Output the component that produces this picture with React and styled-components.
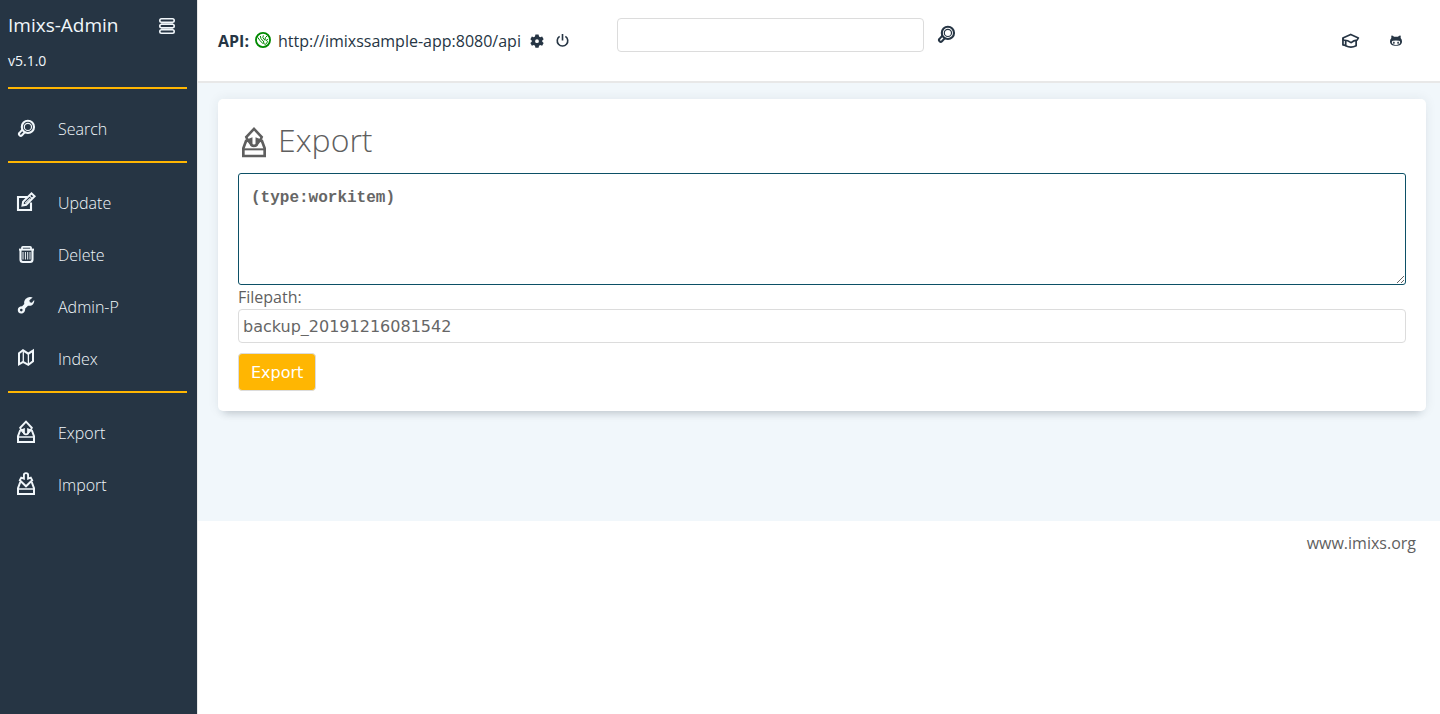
import React, { useState } from "react";
import styled, { createGlobalStyle } from "styled-components";

const menuGroups = [
  [{ label: "Search", icon: "search" }],
  [
    { label: "Update", icon: "edit" },
    { label: "Delete", icon: "trash" },
    { label: "Admin-P", icon: "wrench" },
    { label: "Index", icon: "map" },
  ],
  [
    { label: "Export", icon: "export" },
    { label: "Import", icon: "import" },
  ],
];

// Icon drawings, all on a 24px grid
const icons = {
  menu: (
    <g fill="none" stroke="currentColor" strokeWidth="1.6">
      <rect x="4.8" y="4.8" width="14.4" height="3.4" rx="1.7" />
      <rect x="4.8" y="10.3" width="14.4" height="3.4" rx="1.7" />
      <rect x="4.8" y="15.8" width="14.4" height="3.4" rx="1.7" />
      <path d="M6 9.2h12M6 14.8h12" strokeWidth="0.8" />
    </g>
  ),
  search: (
    <g fill="none" stroke="currentColor">
      <circle cx="13.9" cy="9.9" r="6.1" strokeWidth="2.1" />
      <circle cx="13.9" cy="9.9" r="3.6" strokeWidth="1.2" />
      <path
        d="M8.6 12.4l-3.1 3.4a1.7 1.7 0 0 0 2.5 2.4l3.2-3.3"
        strokeWidth="2"
      />
    </g>
  ),
  edit: (
    <g fill="none" stroke="currentColor">
      <path d="M13.5 6H4v13h13v-7.5" strokeWidth="2.1" />
      <path d="M8.5 14.5l.6-3.8 8.4-8.4 3.1 3-8.4 8.5z" strokeWidth="2" />
      <path d="M15.2 4.6l3.1 3M11 12.4l5.2-5.1" strokeWidth="1.1" />
    </g>
  ),
  trash: (
    <g fill="none" stroke="currentColor">
      <path
        d="M6.5 7v9.5q0 2.5 2.4 2.5h7.200q2.400 0 2.400-2.500V7"
        strokeWidth="2.1"
      />
      <path d="M5 6.600h15" strokeWidth="2" />
      <path d="M8 6V4.600q0-.7.8-.7h7.400q.8 0 .8.700V6" strokeWidth="1.8" />
      <path d="M9 9v7.5M11.400 9v7.500M13.700 9v7.500M16 9v7.500" />
    </g>
  ),
  wrench: (
    <path
      fill="currentColor"
      fillRule="evenodd"
      d="M15 2.2c1.500-.3 2.700-.1 3.700.4L15.400 5.300l.4 1.900 2 .5L20.200 5c.5 3.900-2.500 6.500-6.200 5.700L11.200 13.500c.2 3-1.700 5-4 5-2.100 0-3.600-1.700-3.400-3.800.1-2.100 1.900-3.600 4.300-3.500l2.200-2.200C9.600 5.700 11.500 2.900 15 2.200zM7.300 13.800a1.300 1.300 0 1 0 0 2.600 1.300 1.300 0 0 0 0-2.600z"
    />
  ),
  map: (
    <g fill="none" stroke="currentColor">
      <path
        d="M5 6.300l4-3 5.300 3.400L19 3.600v10.600l-4.700 3.600-5.200-3L5 17.300z"
        strokeWidth="2"
      />
      <path d="M9.300 4.500v10M14.400 7v10" strokeWidth="1.3" />
    </g>
  ),
  export: (
    <g fill="none" stroke="currentColor">
      <path d="M6.300 9L4 15.200V21h16v-5.800L17.700 9" strokeWidth="2" />
      <path d="M4 16h16" strokeWidth="1.5" />
      <path
        d="M12 .6l5.800 6.200-1.200 2.600-2.500-1v3.200q0 1.800-2.100 1.800t-2.100-1.800V8.400l-2.500 1-1.200-2.600z"
        strokeWidth="1.9"
      />
      <path
        d="M7.2 9.500l2.300-.7v3.700zM16.800 9.500l-2.300-.7v3.700z"
        fill="currentColor"
      />
    </g>
  ),
  import: (
    <g fill="none" stroke="currentColor">
      <path d="M6.300 9L4 15.200V21h16v-5.800L17.700 9" strokeWidth="2" />
      <path d="M4 16h16" strokeWidth="1.5" />
      <path
        d="M9.900 5.700V2Q9.900 .1 12 .1T14.100 2v3.700l2.700-1.100 1.400 2.600L12 13.300 5.800 7.200l1.400-2.600z"
        strokeWidth="1.9"
      />
    </g>
  ),
  globe: (
    <g fill="none" stroke="currentColor">
      <circle cx="12" cy="12" r="10.6" strokeWidth="2.7" />
      <path
        d="M4 8q3 5 8 9.500l1.500-2.500-4.500-5L8 6M12.500 5l-.7 3.500 3.200 4 .5-4 2.500-2.500M13 17.500l3 1 3-4-2.300-2 3-1.500"
        strokeWidth="1.5"
      />
    </g>
  ),
  gear: (
    <path
      fill="currentColor"
      fillRule="evenodd"
      d="M9.300 1h5.400l.8 3.300 2 1.100 3.300-1 2.600 4.500-2.400 2.300v2l2.400 2.300-2.600 4.500-3.300-1-2 1.100-.8 3.300H9.300l-.8-3.300-2-1.100-3.300 1-2.600-4.500L3 13.200v-2L.6 8.900l2.600-4.500 3.300 1 2-1.100zM12 9a3.200 3.200 0 1 0 0 6.500A3.200 3.200 0 0 0 12 9z"
    />
  ),
  power: (
    <g fill="none" stroke="currentColor" strokeWidth="3">
      <path d="M6.700 4.300a9.700 9.700 0 1 0 10.600 0" />
      <path d="M12 0v12" />
    </g>
  ),
  cap: (
    <g fill="none" stroke="currentColor" strokeLinejoin="round">
      <path
        d="M4.200 8.800L12.800 4.800l8.400 3.800-1.500 2.500q-3.700.2-6.500 2.600-3.200-2.600-8.400-2.800z"
        strokeWidth="1.8"
      />
      <path d="M7.300 11.500v5.700q5.700 3 11.400 0v-5.700" strokeWidth="1.9" />
      <path d="M4.300 9v7.300l2.700.5" strokeWidth="1.9" />
    </g>
  ),
  cat: (
    <path
      fill="currentColor"
      fillRule="evenodd"
      d="M3 1q3 0 5 2.500h8Q18 1 21 1q1 2.600.2 5Q24 8.500 24 12.500c0 6.500-4 9-12 9S0 19 0 12.500Q0 8.500 2.800 6 2 3.600 3 1zM6 11.500c-4 .5-3.500 8.500 6 8.500s10-8 6-8.500q-6-.8-12 0zM7.800 13c2.300 0 2.300 5 0 5s-2.300-5 0-5zm8.400 0c2.300 0 2.300 5 0 5s-2.300-5 0-5z"
    />
  ),
};

const Icon = ({ name, size = 24 }) => (
  <IconSvg $size={size} viewBox="0 0 24 24" aria-hidden="true">
    {icons[name]}
  </IconSvg>
);

const App = () => {
  const [query, setQuery] = useState("(type:workitem)");
  const [filepath, setFilepath] = useState("backup_20191216081542");
  const [search, setSearch] = useState("");

  return (
    <>
      <GlobalStyle />
      <Page>
        <Sidebar>
          <Brand>
            <BrandTitle>Imixs-Admin</BrandTitle>
            <IconButton type="button" aria-label="Toggle menu">
              <Icon name="menu" />
            </IconButton>
          </Brand>
          <Version>v5.1.0</Version>
          {menuGroups.map((group) => (
            <MenuGroup key={group[0].label}>
              {group.map((item) => (
                <li key={item.label}>
                  <MenuLink href="#">
                    <Icon name={item.icon} />
                    {item.label}
                  </MenuLink>
                </li>
              ))}
            </MenuGroup>
          ))}
        </Sidebar>

        <Main>
          <Header>
            <ApiInfo>
              <strong>API:</strong>
              <Status>
                <Icon name="globe" size={16} />
              </Status>
              <span>http://imixssample-app:8080/api</span>
              <ApiAction href="#" aria-label="Settings">
                <Icon name="gear" size={14} />
              </ApiAction>
              <ApiAction href="#" aria-label="Disconnect">
                <Icon name="power" size={13} />
              </ApiAction>
            </ApiInfo>
            <SearchForm onSubmit={(e) => e.preventDefault()}>
              <TextInput
                aria-label="Search"
                value={search}
                onChange={(e) => setSearch(e.target.value)}
              />
              <IconButton aria-label="Start search">
                <Icon name="search" />
              </IconButton>
            </SearchForm>
            <HeaderLinks>
              <a href="#" aria-label="Documentation">
                <Icon name="cap" size={22} />
              </a>
              <a href="#" aria-label="GitHub">
                <Icon name="cat" size={12} />
              </a>
            </HeaderLinks>
          </Header>

          <Content>
            <Card onSubmit={(e) => e.preventDefault()}>
              <Title>
                <Icon name="export" size={32} />
                Export
              </Title>
              <QueryInput
                aria-label="Query"
                value={query}
                onChange={(e) => setQuery(e.target.value)}
              />
              <Label htmlFor="filepath">Filepath:</Label>
              <TextInput
                id="filepath"
                value={filepath}
                onChange={(e) => setFilepath(e.target.value)}
              />
              <SubmitButton>Export</SubmitButton>
            </Card>
          </Content>

          <Footer>
            <a href="#">www.imixs.org</a>
          </Footer>
        </Main>
      </Page>
    </>
  );
};

const GlobalStyle = createGlobalStyle`
  * {
    box-sizing: border-box;
  }

  body {
    margin: 0;
    background: #fff;
    color: #5f5f5f;
    font-family: "Open Sans", sans-serif;
    font-size: 16px;
    line-height: 24px;
  }

  a {
    color: inherit;
    text-decoration: none;
  }
`;

const IconSvg = styled.svg`
  display: block;
  flex: none;
  width: ${(props) => props.$size}px;
  height: ${(props) => props.$size}px;
  overflow: visible;
`;

const IconButton = styled.button`
  padding: 0;
  border: 0;
  background: none;
  color: inherit;
  cursor: pointer;
`;

const Page = styled.div`
  display: flex;
  min-height: 100vh;
`;

const Sidebar = styled.nav`
  flex: none;
  width: 198px;
  padding: 12px 10px 0 8px;
  border-right: 1px solid #e8e8e8;
  background: #263544;
  color: #f1f7fb;
`;

const Brand = styled.div`
  display: flex;
  align-items: center;
  justify-content: space-between;
  padding-right: 8px;
  height: 28px;
`;

const BrandTitle = styled.span`
  padding-bottom: 2px;
  font-size: 19px;
`;

const Version = styled.div`
  margin: 9px 0 14px;
  font-size: 14px;
`;

const MenuGroup = styled.ul`
  margin: 0;
  padding: 14px 0 6px;
  border-top: 2px solid #ffb602;
  list-style: none;
`;

const MenuLink = styled.a`
  display: flex;
  align-items: center;
  gap: 20px;
  height: 52px;
  padding-left: 6px;
  font-weight: 300;
`;

const Main = styled.div`
  flex: 1;
  min-width: 0;
`;

const Header = styled.header`
  display: grid;
  grid-template-columns: 399px 1fr auto;
  height: 83px;
  padding: 0 38px 0 20px;
  border-bottom: 2px solid #e8e8e8;
  color: #263544;
`;

const ApiInfo = styled.div`
  display: flex;
  align-items: center;
`;

const Status = styled.span`
  margin: 0 7px 2px 6px;
  color: #008a00;
`;

const ApiAction = styled.a`
  margin-left: 9px;

  & + & {
    margin-left: 12px;
  }
`;

const SearchForm = styled.form`
  display: flex;
  gap: 10px;
  align-items: center;
  align-self: start;
  margin-top: 18px;

  input {
    width: 307px;
  }
`;

const HeaderLinks = styled.div`
  display: flex;
  align-items: center;
  gap: 29px;
`;

const Content = styled.main`
  padding: 16px 14px 110px 20px;
  background: #f1f7fb;
`;

const Card = styled.form`
  padding: 20px;
  border-radius: 5px;
  background: #fff;
  box-shadow:
    0 0 12px rgba(39, 54, 69, 0.08),
    0 8px 8px -6px rgba(39, 54, 69, 0.22);
`;

const Title = styled.h1`
  display: flex;
  align-items: center;
  gap: 8px;
  margin: 0 0 12px;
  font-size: 32px;
  font-weight: 300;
  line-height: 42px;

  svg {
    margin-top: 8px;
  }
`;

const QueryInput = styled.textarea`
  display: block;
  width: 100%;
  height: 112px;
  padding: 12px;
  border: 1px solid #0c5066;
  border-radius: 3px;
  outline: none;
  background: #fff;
  color: #666;
  font-family: "Courier 10 Pitch", "Liberation Mono", monospace;
  font-size: 16px;
  font-weight: bold;
  line-height: 24px;
`;

const Label = styled.label`
  display: block;
`;

const TextInput = styled.input`
  display: block;
  width: 100%;
  height: 34px;
  padding: 0 4px;
  border: 1px solid #dcdcdc;
  border-radius: 4px;
  background: #fff;
  color: #666;
  font-family: "DejaVu Sans", sans-serif;
  font-size: 16px;
`;

const SubmitButton = styled.button`
  display: block;
  height: 38px;
  margin-top: 10px;
  padding: 0 12px;
  border: 1px solid #dcdcdc;
  border-radius: 4px;
  background: #ffb602;
  color: #fff;
  font-family: "DejaVu Sans", sans-serif;
  font-size: 16px;
  cursor: pointer;
`;

const Footer = styled.footer`
  padding: 10px 24px;
  text-align: right;
`;

export default App;
